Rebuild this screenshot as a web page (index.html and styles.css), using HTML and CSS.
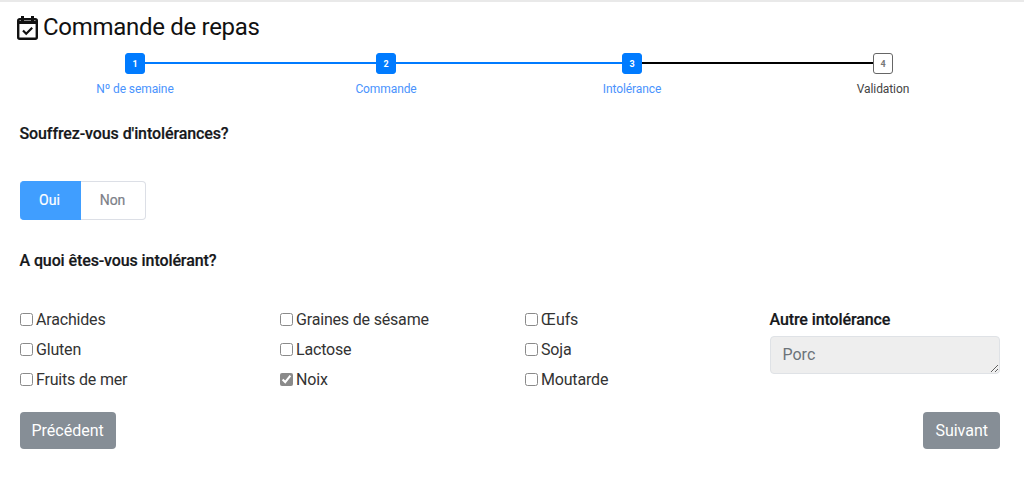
FILE: index.html
```html
<!DOCTYPE html>
<html lang="fr">
<head>
    <meta charset="UTF-8">
    <title>Commande de repas</title>
    <meta name="viewport" content="width=device-width, initial-scale=1">
    <link rel="stylesheet" href="styles.css">
</head>
<body>
<div class="container">
    <h1 class="title">
        <svg class="title-icon" viewBox="0 0 21 24" width="21" height="24" aria-hidden="true">
            <path d="M5.5 0v5M15.5 0v5" fill="none" stroke="#111" stroke-width="3"/>
            <rect x="1.2" y="3.2" width="18.6" height="19.6" rx="1.5" fill="none" stroke="#111" stroke-width="2.4"/>
            <path d="M1 6.5h19" stroke="#111" stroke-width="3"/>
            <path d="M6 14.5l3.2 3.2 6-6" fill="none" stroke="#111" stroke-width="2.2"/>
        </svg>
        Commande de repas
    </h1>

    <div class="stepper">
        <div class="box active">1</div>
        <div class="line active"></div>
        <div class="box active">2</div>
        <div class="line active"></div>
        <div class="box active">3</div>
        <div class="line"></div>
        <div class="box">4</div>
        <div class="label active">Nº de semaine</div>
        <div></div>
        <div class="label active">Commande</div>
        <div></div>
        <div class="label active">Intolérance</div>
        <div></div>
        <div class="label">Validation</div>
    </div>

    <p class="question first">Souffrez-vous d'intolérances?</p>
    <div class="toggle">
        <span class="toggle-btn selected">Oui</span>
        <span class="toggle-btn">Non</span>
    </div>

    <p class="question second">A quoi êtes-vous intolérant?</p>
    <div class="options">
        <label class="option"><input type="checkbox">Arachides</label>
        <label class="option"><input type="checkbox">Graines de sésame</label>
        <label class="option"><input type="checkbox">Œufs</label>
        <div class="other">
            <label class="other-label" for="other">Autre intolérance</label>
            <textarea class="other-text" id="other" rows="1" disabled>Porc</textarea>
        </div>
        <label class="option"><input type="checkbox">Gluten</label>
        <label class="option"><input type="checkbox">Lactose</label>
        <label class="option"><input type="checkbox">Soja</label>
        <label class="option"><input type="checkbox">Fruits de mer</label>
        <label class="option"><input type="checkbox" checked>Noix</label>
        <label class="option"><input type="checkbox">Moutarde</label>
    </div>

    <div class="actions">
        <button class="nav-btn" type="button">Précédent</button>
        <button class="nav-btn" type="button">Suivant</button>
    </div>
</div>
</body>
</html>
```

FILE: styles.css
```css
* { box-sizing: border-box; }
body { background: #fff; font-family: Roboto, "Liberation Sans", sans-serif; margin: 0; padding: 0; color: #212529; font-size: 16px; border-top: 2px solid #e9e9e9; }
.container { padding: 11px 24px 0 19.5px; }
.title { display: flex; align-items: center; gap: 5px; margin: 0 0 0 -2.5px; font-size: 24px; font-weight: 400; line-height: 29px; letter-spacing: -0.3px; color: #111; }
.title-icon { flex: none; }

.stepper { display: grid; grid-template-columns: 20px 231px 20px 226px 20px 231px 20px; margin: 11px 0 0 105.5px; }
.box { height: 21px; border: 1px solid #666; border-radius: 3px; background: #fff; color: #777; font-size: 9px; font-weight: 700; display: flex; align-items: center; justify-content: center; }
.box.active { background: #007bff; border-color: #007bff; color: #fff; }
.line { height: 2px; background: #000; margin-top: 9px; }
.line.active { background: #007bff; }
.label { display: flex; justify-content: center; white-space: nowrap; font-size: 12px; line-height: 14px; letter-spacing: -0.1px; margin-top: 8px; color: #444; }
.label.active { color: #4a93fd; }

.question { margin: 0; font-weight: 500; line-height: 19px; color: #16181b; font-size: 16px; letter-spacing: -0.1px; -webkit-text-stroke: 0.2px #16181b; }
.question.first { margin-top: 28px; }
.question.second { margin-top: 31px; }

.toggle { display: flex; width: 126px; height: 39px; margin-top: 38px; font-size: 14px; -webkit-text-stroke: 0.2px; }
.toggle-btn { flex: 1; display: flex; align-items: center; justify-content: center; padding-bottom: 2px; color: #7c8088; border: 1px solid #dcdfe6; border-left: 0; border-radius: 0 4px 4px 0; }
.toggle-btn.selected { flex: none; width: 61px; background: #409eff; border-color: #409eff; color: #fff; border-radius: 4px 0 0 4px; }

.options { display: grid; grid-template-columns: 260px 245px 245px 230px; grid-auto-rows: 30px; margin-top: 34px; }
.option { display: flex; align-items: center; color: #333; letter-spacing: -0.18px; }
.option input { width: 13px; height: 13px; margin: 0 3.5px 0 0; accent-color: #767676; opacity: 0.85; }
.other { grid-column: 4; grid-row: 1 / span 3; }
.other-label { display: block; font-weight: 500; line-height: 32px; letter-spacing: -0.1px; color: #16181b; -webkit-text-stroke: 0.2px #16181b; }
.other-text { display: block; width: 230px; height: 38px; padding: 8px 12px 4px; border: 1px solid #dfe2e6; border-radius: 4px; background: #eee; color: #6c7379; font: inherit; }

.actions { display: flex; justify-content: space-between; margin-top: 18px; }
.nav-btn { height: 37px; padding: 0 12px; border: 0; border-radius: 4px; background: #868e96; color: #fff; font: inherit; }
```
